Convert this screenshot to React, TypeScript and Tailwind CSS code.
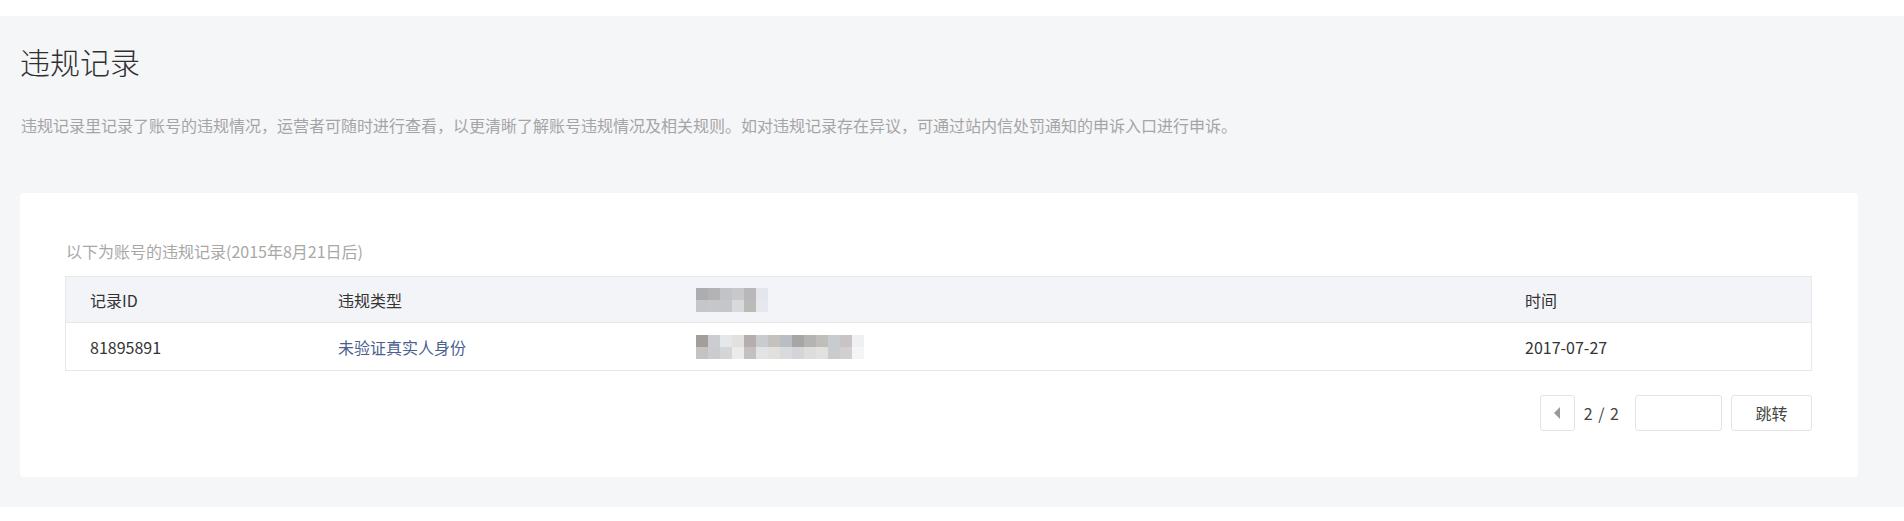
import React from "react";

const headMosaic = [
  ["#adadaf", "#b3b3b5", "#c0c3c8", "#c8c8ca", "#b8b7bb", "#e4e6ee"],
  ["#c6c5ca", "#c6c7cb", "#c5c6ca", "#d8d9dc", "#bcb9b9", "#e6e8f0"],
];

const rowMosaic = [
  ["#a29f9a", "#cbcdd0", "#e4e8eb", "#e2e1e0", "#b6aeac", "#c9cbce", "#c4c1be", "#b8bec2", "#a6a6a6", "#b4b4b2", "#c0bebb", "#c7ccd0", "#c8c4c4", "#eff0f2"],
  ["#c6c2c1", "#cbcccf", "#d3d5d7", "#ebebe8", "#c4c0c2", "#e2e3e5", "#e0e0dd", "#d9dadc", "#d3d5d8", "#dddedb", "#e1e1df", "#cacbcf", "#d2cfd0", "#f4f5f7"],
];

function Mosaic({ rows }: { rows: string[][] }) {
  return (
    <div className="flex flex-col">
      {rows.map((r, i) => (
        <div key={i} className="flex">
          {r.map((c, j) => (
            <div key={j} className="w-3 h-3" style={{ backgroundColor: c }} />
          ))}
        </div>
      ))}
    </div>
  );
}

export default function App() {
  return (
    <div
      className="bg-white pt-4 h-[521px] text-[#333]"
      style={{ fontFamily: '"Noto Sans CJK SC", "Noto Sans", sans-serif' }}
    >
      <div className="bg-[#f5f6f8] h-[491px] pl-5 pr-[46px] pt-[25px]">
        <h1 className="text-[30px] leading-[40px] font-light text-[#2f2f2f]">违规记录</h1>
        <p className="mt-8 pl-px text-[16px] leading-6 text-[#a5a5a5]">
          违规记录里记录了账号的违规情况，运营者可随时进行查看，以更清晰了解账号违规情况及相关规则。如对违规记录存在异议，可通过站内信处罚通知的申诉入口进行申诉。
        </p>

        <div className="mt-14 bg-white rounded-[4px] pl-[45px] pr-[46px] pt-[46px] pb-[46px]">
          <div className="text-[16px] leading-6 text-[#a8a8a8] pl-px">以下为账号的违规记录(2015年8月21日后)</div>

          <div className="mt-[13px] border border-[#e6e8ec] text-[16px]">
            <div className="grid grid-cols-[248px_358px_829px_1fr] h-[46px] items-center bg-[#f3f4f8] border-b border-[#e6e8ec]">
              <div className="pl-6">记录ID</div>
              <div className="pl-6">违规类型</div>
              <div className="pl-6">
                <Mosaic rows={headMosaic} />
              </div>
              <div className="pl-6">时间</div>
            </div>
            <div className="grid grid-cols-[248px_358px_829px_1fr] h-[47px] items-center">
              <div className="pl-6">81895891</div>
              <div className="pl-6 text-[#4b5f8f]">未验证真实人身份</div>
              <div className="pl-6">
                <Mosaic rows={rowMosaic} />
              </div>
              <div className="pl-6">2017-07-27</div>
            </div>
          </div>

          <div className="mt-6 flex justify-end items-center">
            <button
              type="button"
              className="w-[35px] h-9 border border-[#e3e3e3] rounded-[3px] bg-white flex items-center justify-center"
            >
              <span className="w-0 h-0 border-y-[6px] border-y-transparent border-r-[6px] border-r-[#9a9a9a]" />
            </button>
            <span className="ml-[9px] text-[16px] leading-6 text-[#444] tracking-[1px]">2 / 2</span>
            <input
              type="text"
              className="ml-[15px] w-[87px] h-9 border border-[#e3e3e3] rounded-[3px] bg-white outline-none"
            />
            <button
              type="button"
              className="ml-[9px] w-[81px] h-9 border border-[#e3e3e3] rounded-[3px] bg-white text-[16px] text-[#444]"
            >
              跳转
            </button>
          </div>
        </div>
      </div>
    </div>
  );
}
